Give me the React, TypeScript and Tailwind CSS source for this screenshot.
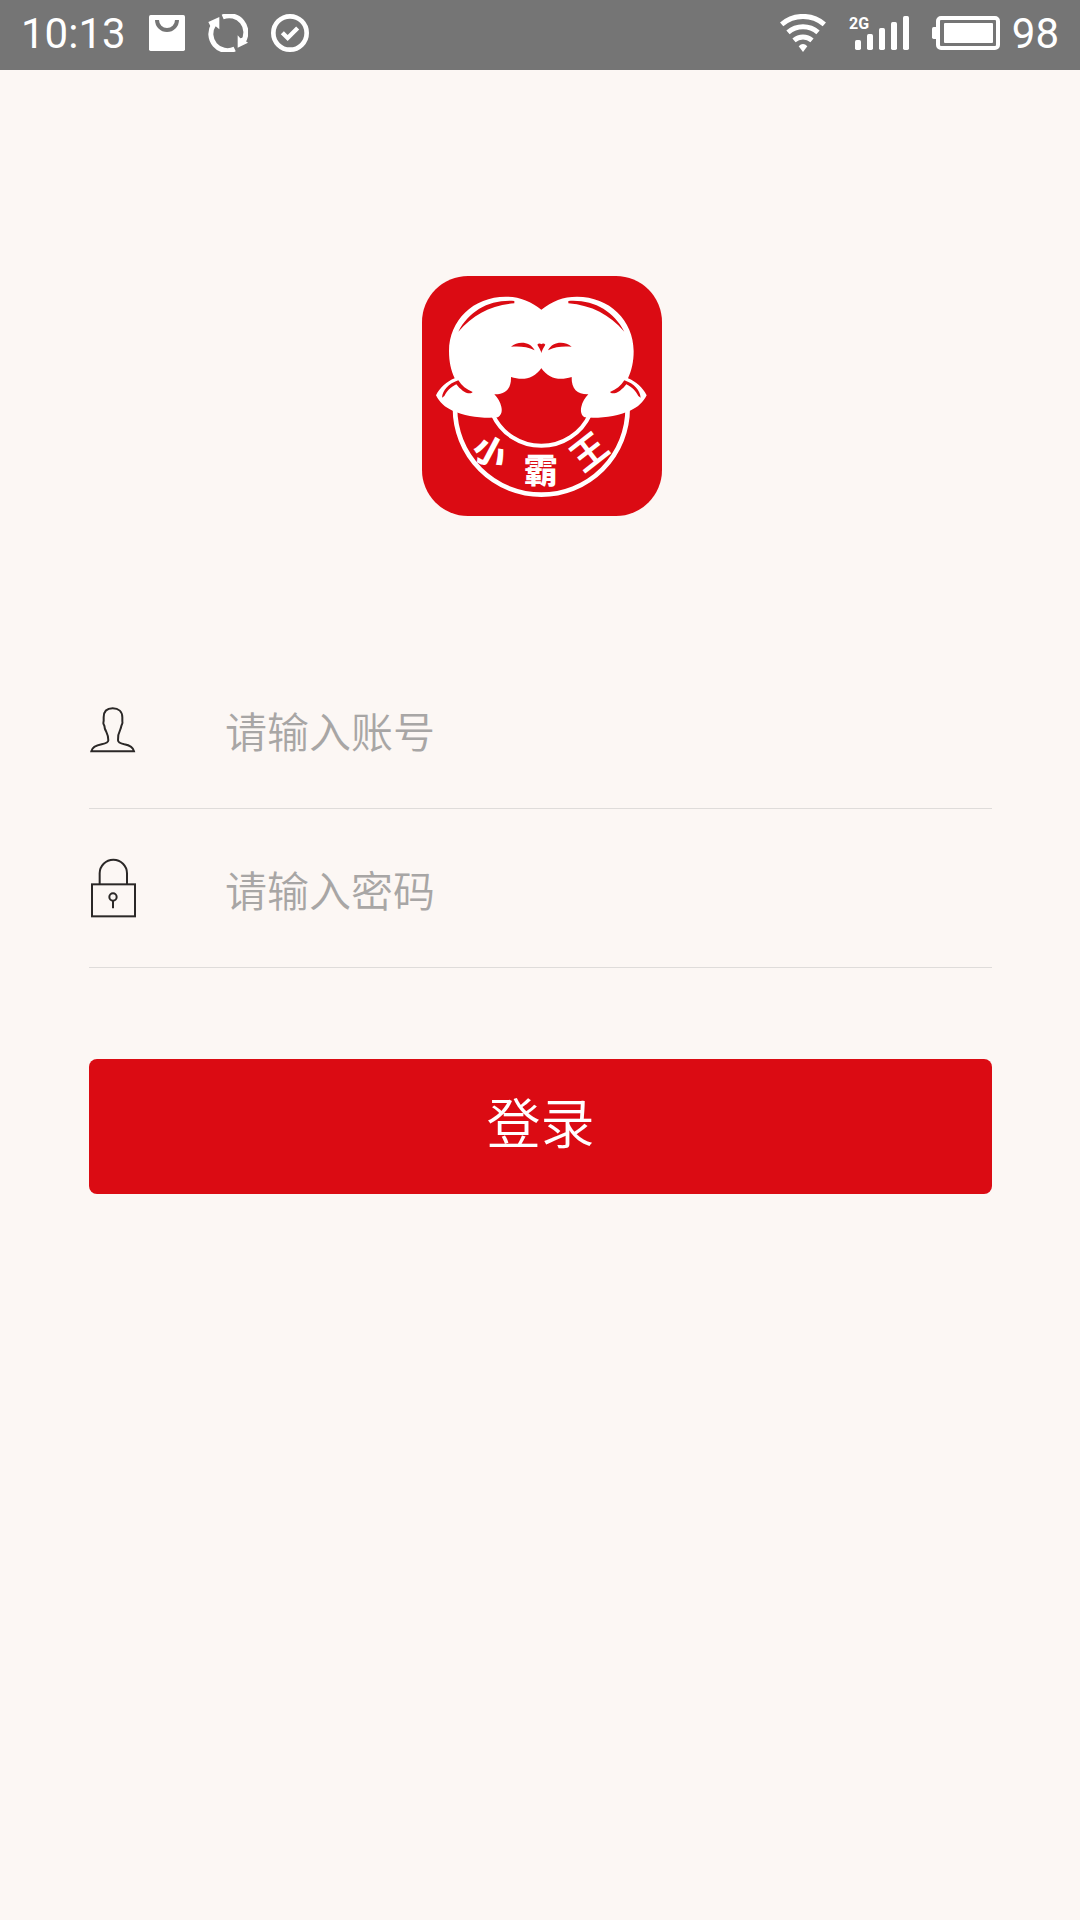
import React, { useState } from "react";

const SANS = "font-['Roboto','Noto_Sans_CJK_SC',sans-serif]";
const CJK = "font-['Noto_Sans_CJK_SC',sans-serif]";

function BagIcon() {
  return (
    <svg className="h-[38px] w-9" viewBox="444 42 108 114" fill="none">
      <rect x="444" y="45" width="108" height="108" rx="5" fill="#fff" />
      <path d="M468 60a30 30 0 0 0 60 0" stroke="#757575" strokeWidth="12" />
    </svg>
  );
}

function SyncIcon() {
  return (
    <svg className="h-[38px] w-10" viewBox="621 42 120 114" fill="none">
      <path
        d="M665 51A50 50 0 0 1 726 125M701 147A50 50 0 0 1 638 74"
        stroke="#fff"
        strokeWidth="15"
      />
      <path d="M622 66L655 51V88L644 79L631 84Z" fill="#fff" />
      <path d="M710 106L718 115L731 112V121L741 128L710 143Z" fill="#fff" />
    </svg>
  );
}

function CheckIcon() {
  return (
    <svg className="size-[38px]" viewBox="810 42 114 114" fill="none" stroke="#fff">
      <circle cx="867" cy="99" r="50" strokeWidth="14" />
      <path d="M844 98L860 114L890 84" strokeWidth="13" />
    </svg>
  );
}

function WifiIcon() {
  return (
    <svg className="h-[38px] w-[46px]" viewBox="57 42 138 114" fill="none">
      <path
        d="M62 73A98 98 0 0 1 190 73M81 97A68 68 0 0 1 171 97M99 121A42 42 0 0 1 153 121"
        stroke="#fff"
        strokeWidth="15"
      />
      <path d="M113 139Q126 125 139 139L126 156Z" fill="#fff" />
    </svg>
  );
}

function SignalIcon() {
  return (
    <svg className="h-[38px] w-[60px]" viewBox="264 42 180 114" fill="#fff">
      <text x="264" y="86" fontSize="48" fontWeight="700">
        2G
      </text>
      <rect x="282" y="120" width="18" height="30" rx="5" />
      <rect x="318" y="102" width="18" height="48" rx="5" />
      <rect x="354" y="84" width="18" height="66" rx="5" />
      <rect x="390" y="66" width="18" height="84" rx="5" />
      <rect x="426" y="48" width="18" height="102" rx="5" />
    </svg>
  );
}

function BatteryIcon() {
  return (
    <svg className="h-[38px] w-[68px]" viewBox="516 42 204 114" fill="#fff">
      <rect x="534" y="54" width="180" height="90" rx="9" fill="none" stroke="#fff" strokeWidth="12" />
      <rect x="552" y="69" width="147" height="60" rx="3" />
      <path d="M530 81H521Q516 81 516 86V112Q516 117 521 117H530Z" />
    </svg>
  );
}

// one half of the emblem, the other half is mirrored
function LogoHalf() {
  return (
    <g>
      <path
        d="M395 135C362 108 328 95 287 95C190 95 117 166 117 258C117 290 123 316 134 340C110 350 90 367 78 391C88 411 105 428 128 437C165 453 215 461 264 457C275 450 277 438 274 425C271 411 263 399 253 388C285 389 304 373 303 336C338 347 371 343 395 308Z"
        fill="#fff"
      />
      <g fill="#db0b13">
        <path d="M313 108C238 103 178 137 145 200C190 149 242 121 313 115Z" />
        <path d="M96 398C98 376 115 356 145 346C155 362 169 374 188 381C184 388 168 385 158 377C150 371 145 366 139 358C120 368 112 377 103 393Z" />
        <path d="M303 245C323 228 360 228 374 256C352 244 326 243 303 245Z" />
        <path d="M395 238Q387 233 382 239L389 251L395 265Z" />
      </g>
    </g>
  );
}

function Logo() {
  return (
    <svg className={`size-60 rounded-[46px] bg-[#db0b13] ${CJK}`} viewBox="36 33 720 720" role="img" aria-label="小霸王">
      <g fill="none" stroke="#fff">
        <path d="M135 430A259 259 0 0 0 653 430" strokeWidth="14" />
        <path d="M248 448A160 160 0 0 0 540 448" strokeWidth="12" />
      </g>
      <LogoHalf />
      <g transform="translate(788 0) scale(-1 1)">
        <LogoHalf />
      </g>
      <g fill="#fff" fontWeight="900" textAnchor="middle">
        <text fontSize="100" transform="translate(241 560) rotate(28)" y="38">
          小
        </text>
        <text fontSize="102" x="392" y="653">
          霸
        </text>
        <text fontSize="108" fontWeight="700" transform="translate(536 559) rotate(-38)" y="41">
          王
        </text>
      </g>
    </svg>
  );
}

function UserIcon() {
  return (
    <svg className="h-[46px] w-[46px]" viewBox="30 80 138 138" fill="none" stroke="#2b2827" strokeWidth="6">
      <path d="M34 213C37 199 49 195 65 192C80 189 85 186 85 180C86 165 80 158 75 146C73 141 75 137 71 132C69 128 70 126 71 122V111C71 94 81 84 98 84C116 84 127 94 127 111V122C128 127 128 129 126 132C123 137 124 141 121 147C115 159 113 166 114 180C114 186 119 189 133 192C149 195 159 200 162 213Z" />
    </svg>
  );
}

function LockIcon() {
  return (
    <svg className="h-[60px] w-[46px]" viewBox="30 56 138 180" fill="none" stroke="#2b2827" strokeWidth="6">
      <rect x="36" y="135" width="129" height="96" />
      <path d="M59 135V102A41 41 0 0 1 141 102V135" />
      <circle cx="99" cy="173" r="11" />
      <path d="M99 184V207" />
    </svg>
  );
}

function Home() {
  const [account, setAccount] = useState("");
  const [password, setPassword] = useState("");

  const login = (event: React.FormEvent<HTMLFormElement>) => {
    event.preventDefault();
  };

  const rowClass = "flex items-center gap-[89px] border-b border-[#dfdcda] pl-px";
  const inputClass =
    "h-20 min-w-0 flex-1 bg-transparent text-[42px] font-[350] text-[#333] outline-none placeholder:text-[#a8a6a5]";

  return (
    <main className={`min-h-screen bg-[#fcf7f4] ${SANS}`}>
      <header className="flex h-[70px] items-center justify-between bg-[#757575] px-[21px] pb-1 text-[42px] leading-none text-white">
        <div className="flex items-center gap-[23px]">
          <span className="pt-0.5">10:13</span>
          <BagIcon />
          <SyncIcon />
          <CheckIcon />
        </div>
        <div className="flex items-center gap-[23px]">
          <WifiIcon />
          <SignalIcon />
          <div className="flex items-center gap-3">
            <BatteryIcon />
            <span className="pt-0.5">98</span>
          </div>
        </div>
      </header>

      <div className="flex justify-center pt-[206px] pl-1">
        <Logo />
      </div>

      <form onSubmit={login} className={`mt-[133px] pr-[88px] pl-[89px] ${CJK}`}>
        <div className={`h-40 pt-0.5 ${rowClass}`}>
          <label htmlFor="account" aria-label="账号">
            <UserIcon />
          </label>
          <input
            id="account"
            type="text"
            placeholder="请输入账号"
            value={account}
            onChange={(e) => setAccount(e.target.value)}
            className={inputClass}
          />
        </div>
        <div className={`h-[159px] ${rowClass}`}>
          <label htmlFor="password" aria-label="密码">
            <LockIcon />
          </label>
          <input
            id="password"
            type="password"
            placeholder="请输入密码"
            value={password}
            onChange={(e) => setPassword(e.target.value)}
            className={inputClass}
          />
        </div>
        <button
          type="submit"
          className="mt-[91px] h-[135px] w-full rounded-lg bg-[#db0b13] pb-3 text-[54px] font-[350] text-white"
        >
          登录
        </button>
      </form>
    </main>
  );
}

export default Home;
